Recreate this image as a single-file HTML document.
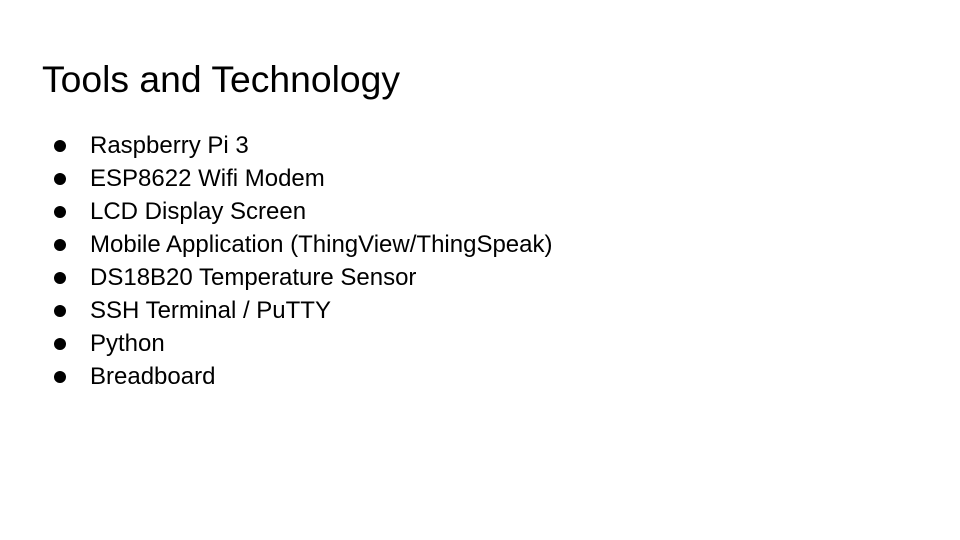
<!DOCTYPE html>
<html><head><meta charset="utf-8"><style>
body{margin:0;width:960px;height:540px;background:#fff;overflow:hidden;font-family:"Liberation Sans",Arial,sans-serif;color:#000;position:relative}
h1{position:absolute;left:42px;top:57px;margin:0;font-weight:normal;font-size:37.3px;line-height:44px}
ul{position:absolute;left:0;top:129px;margin:0;padding:0;list-style:none}
li{position:relative;font-size:24px;line-height:33px;padding-left:90px;white-space:nowrap}
li:before{content:"";position:absolute;left:54px;top:11px;width:12px;height:12px;border-radius:50%;background:#000}
</style></head><body>
<h1>Tools and Technology</h1>
<ul>
<li>Raspberry Pi 3</li>
<li>ESP8622 Wifi Modem</li>
<li>LCD Display Screen</li>
<li>Mobile Application (ThingView/ThingSpeak)</li>
<li>DS18B20 Temperature Sensor</li>
<li>SSH Terminal / PuTTY</li>
<li>Python</li>
<li>Breadboard</li>
</ul>
</body></html>
